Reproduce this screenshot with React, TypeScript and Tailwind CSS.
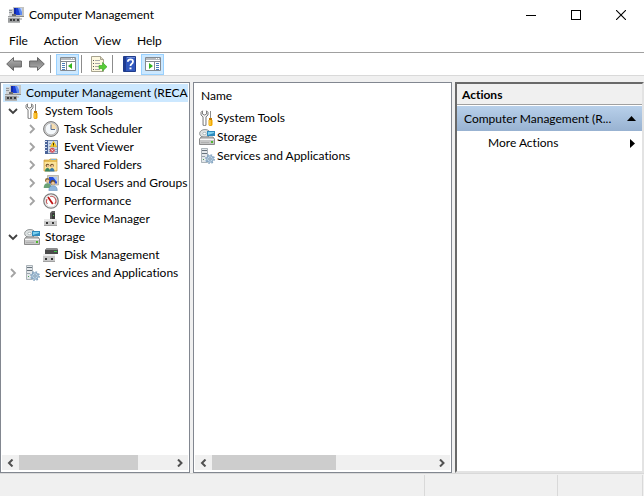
import type { ComponentType, ReactNode } from "react";
import clsx from "clsx";

type IconProps = { className?: string };
type IconType = ComponentType<IconProps>;

function Svg({ className, children }: { className?: string; children: ReactNode }) {
  return (
    <svg viewBox="0 0 16 16" className={clsx("h-4 w-4 shrink-0", className)} aria-hidden="true">
      {children}
    </svg>
  );
}

function ComputerIcon(props: IconProps) {
  return (
    <Svg {...props}>
      <path d="M5 0H16V10H5Z" fill="#c3c3c0" />
      <path d="M5 9H16V10H5Z" fill="#8c8c88" />
      <path d="M6 1H14V8H6Z" fill="#1a3fd6" />
      <path d="M10 1H14V8H12Z" fill="#5f8bf0" />
      <path d="M12 1H14V5Z" fill="#b9d0fb" />
      <path d="M6 1H8V8H6Z" fill="#1229a8" />
      <path d="M1 2H5V9H1Z" fill="#d2d4d6" />
      <path d="M1 3H4V4H1ZM1 5H4V6H1Z" fill="#8f959b" />
      <path d="M4 7H8V9H4Z" fill="#6a6a6e" />
      <path d="M0 9H12V15H0Z" fill="#9b9d9e" />
      <path d="M0 10H12V11H0Z" fill="#d5d7d8" />
      <path d="M0 15H12V16H0Z" fill="#b4b6b7" />
      <path d="M2 12H4V14H2ZM5 12H7V14H5ZM9 12H11V14H9Z" fill="#3a3b3d" />
      <path d="M12 11H14V13H12Z" fill="#c8c8c8" />
    </Svg>
  );
}

function ToolsIcon(props: IconProps) {
  return (
    <Svg {...props}>
      <path
        d="M3.5 .8L2 2.3V5L4 7V15.3H7V7L9 5V2.3L7.5 .8V4L5.5 5L3.5 4Z"
        fill="#ececec"
        stroke="#757575"
        strokeWidth=".9"
      />
      <path d="M5 7H6V15H5Z" fill="#fff" />
      <path d="M11 1H12V9H11Z" fill="#8b8b8b" />
      <path d="M10 8H13V10H10Z" fill="#c27800" />
      <path d="M9.5 10H13.5V15L12.5 16H10.5L9.5 15Z" fill="#f2a900" />
      <path d="M10.5 10H11.5V15H10.5Z" fill="#ffdc6a" />
    </Svg>
  );
}

function ClockIcon(props: IconProps) {
  return (
    <Svg {...props}>
      <circle cx="8" cy="8" r="7.4" fill="#d0d0d0" stroke="#777" strokeWidth="1" />
      <circle cx="8" cy="8" r="5.8" fill="#f4f8fb" stroke="#a5a5a5" strokeWidth=".5" />
      <path d="M8 8V2.3A5.6 5.6 0 0 1 13.6 8Z" fill="#f6ddb0" />
      <path d="M8 3.5V8.5H12" fill="none" stroke="#5a6f92" strokeWidth="1" />
    </Svg>
  );
}

function EventIcon(props: IconProps) {
  return (
    <Svg {...props}>
      <path d="M2.5 1.5H14.5V14.5H2.5Z" fill="#c9d8ec" stroke="#6f83a5" strokeWidth="1" />
      <path d="M2 1H5V15H2Z" fill="#4a6499" />
      <path d="M1 2H4V3H1ZM1 5H4V6H1ZM1 8H4V9H1ZM1 11H4V12H1Z" fill="#dbe3f0" />
      <path d="M6 4.5H8M6 7.5H8M6 10.5H8M6 12.5H8M12 10.5H14M12 12.5H14" stroke="#8b9cbd" strokeWidth="1" />
      <path d="M10.5 2.3L13.8 7.8H7.2Z" fill="#ffd226" stroke="#d09d00" strokeWidth=".5" />
      <path d="M10 4H11V6H10ZM10 6.5H11V7.3H10Z" fill="#3b3000" />
      <circle cx="9.3" cy="11.3" r="2.5" fill="#d5505a" />
      <path d="M8.3 10.3L10.3 12.3M10.3 10.3L8.3 12.3" stroke="#fff" strokeWidth=".7" />
    </Svg>
  );
}

function FoldersIcon(props: IconProps) {
  return (
    <Svg {...props}>
      <path d="M1 3L6 3L7 2H14V14H1Z" fill="#e6bd54" stroke="#c49a3c" strokeWidth=".7" />
      <path d="M8 2H13V3H8Z" fill="#7fb5d6" />
      <path d="M1.5 5H13.5V13.5H1.5Z" fill="#fbe39a" />
      <circle cx="4.5" cy="8.5" r="1.8" fill="#6b4b27" />
      <circle cx="4.8" cy="9" r="1.2" fill="#edc293" />
      <path d="M2 14.5Q2 11 4.5 11T7 14.5Z" fill="#39845b" />
      <circle cx="9" cy="8.5" r="1.8" fill="#6b4b27" />
      <circle cx="9.2" cy="9" r="1.2" fill="#edc293" />
      <path d="M6.7 14.5Q6.7 11 9 11T11.5 14.5Z" fill="#397ba8" />
    </Svg>
  );
}

function UsersIcon(props: IconProps) {
  return (
    <Svg {...props}>
      <path d="M4.5 .5H15.5V10H4.5Z" fill="#d4d0c4" stroke="#98958c" strokeWidth=".6" />
      <path d="M6 2H14V8.5H6Z" fill="#264edb" />
      <path d="M10 2H14V7Z" fill="#a9c7fb" />
      <circle cx="4.3" cy="5.3" r="2.3" fill="#8d6a35" />
      <circle cx="4.6" cy="6" r="1.6" fill="#edc69a" />
      <path d="M.7 13Q.7 8.2 4.5 8.2T8.5 13Z" fill="#6aa276" />
      <circle cx="9.8" cy="7.5" r="2.4" fill="#6e4e22" />
      <circle cx="10" cy="8.3" r="1.7" fill="#edc69a" />
      <path d="M5.8 15.5Q5.8 10.7 10 10.7T14.3 15.5Z" fill="#8fb6dc" stroke="#5584b5" strokeWidth=".5" />
    </Svg>
  );
}

function GaugeIcon(props: IconProps) {
  return (
    <Svg {...props}>
      <circle cx="8" cy="8" r="7.2" fill="#fff" stroke="#7d7d7d" strokeWidth="1.3" />
      <circle cx="8" cy="8" r="5.9" fill="#fff" stroke="#cfcfcf" strokeWidth=".6" />
      <path d="M4.4 11A4.6 4.6 0 0 1 4 6M7.2 3.5A4.6 4.6 0 0 1 11.8 11" fill="none" stroke="#c35a5a" strokeWidth="1.1" />
      <path d="M5 4L9.8 11" stroke="#c01414" strokeWidth="1.8" />
    </Svg>
  );
}

function DeviceIcon(props: IconProps) {
  return (
    <Svg {...props}>
      <path d="M7 2L9 0H12V8H7Z" fill="#5d5d5d" />
      <path d="M9 2H12V8H9Z" fill="#3a3a3a" />
      <path d="M10 4H11V5H10Z" fill="#55d055" />
      <path d="M1 8H14V15H1Z" fill="#c9c9c9" />
      <path d="M1 8H14V10H1Z" fill="#e9e9e9" />
      <path d="M1 14H14V15H1Z" fill="#a2a2a2" />
      <path d="M3 11H5V13H3ZM9 11H11V13H9Z" fill="#333" />
    </Svg>
  );
}

function StorageIcon(props: IconProps) {
  return (
    <Svg {...props}>
      <ellipse cx="6" cy="4.5" rx="5.4" ry="4" fill="#dde1e2" stroke="#7b8080" strokeWidth=".8" />
      <ellipse cx="5.5" cy="4.5" rx="1.7" ry="1.2" fill="#fff" stroke="#899999" strokeWidth=".6" />
      <path d="M8 2H16V7H8Z" fill="#2d8abd" />
      <path d="M9 3H15V4L9 6Z" fill="#7bd0ef" />
      <path d="M.5 10L2 8H14L15.5 10V15.5H.5Z" fill="#c6c6c6" stroke="#757575" strokeWidth=".8" />
      <path d="M1 10H15V11H1Z" fill="#f5f5f5" />
      <path d="M2 13H10V14H2Z" fill="#b0b0b0" />
      <path d="M12 12H14V14H12Z" fill="#4eb82d" />
    </Svg>
  );
}

function DiskIcon(props: IconProps) {
  return (
    <Svg {...props}>
      <path d="M2 3L4 1H14L15 3V7H2Z" fill="#4b4b4b" />
      <path d="M4 1H14L15 3H2Z" fill="#8d8d8d" />
      <path d="M11 4H14V5H11Z" fill="#40c94b" />
      <path d="M0 7H12V15H0Z" fill="#c9c9c9" />
      <path d="M0 7H12V9H0Z" fill="#ececec" />
      <path d="M0 14H12V15H0Z" fill="#a2a2a2" />
      <path d="M2 11H4V13H2ZM8 11H10V13H8Z" fill="#333" />
    </Svg>
  );
}

function ServerIcon(props: IconProps) {
  return (
    <Svg {...props}>
      <path d="M2.5 .5H8.5V14.5H2.5Z" fill="#e4e8eb" stroke="#98a2aa" strokeWidth=".8" />
      <path d="M3 2H8V3H3ZM3 5H8V6H3Z" fill="#68747d" />
      <path d="M3 8H6V9H3Z" fill="#9ba5ac" />
      <path d="M4 11H5V12H4Z" fill="#48a052" />
      <circle cx="11" cy="11" r="4.2" fill="none" stroke="#86a6c2" strokeWidth="1.4" strokeDasharray="1.7 1.6" />
      <circle cx="11" cy="11" r="3.3" fill="#c3d8e9" stroke="#6f93b3" strokeWidth=".8" />
      <circle cx="11" cy="11" r="1.2" fill="#fff" stroke="#567a99" strokeWidth=".8" />
    </Svg>
  );
}

function BackIcon(props: IconProps) {
  return (
    <Svg {...props}>
      <defs>
        <linearGradient id="arrowGrad" x1="0" y1="0" x2="0" y2="1">
          <stop offset="0%" stopColor="#b9b9b9" />
          <stop offset="50%" stopColor="#929292" />
          <stop offset="100%" stopColor="#777" />
        </linearGradient>
      </defs>
      <path d="M.7 8L7.5 1.5V5H15.4V11H7.5V14.5Z" fill="url(#arrowGrad)" stroke="#686868" strokeWidth="1" />
    </Svg>
  );
}

function ForwardIcon() {
  return <BackIcon className="rotate-180" />;
}

function TreePaneIcon(props: IconProps) {
  return (
    <Svg {...props}>
      <path d="M.5 1.5H15.5V14.5H.5Z" fill="#fff" stroke="#848a91" />
      <path d="M1 2H15V4H1Z" fill="#b7bbc0" />
      <path d="M11 2H12V3H11ZM13 2H14V3H13Z" fill="#fff" />
      <path d="M1 5.5H15M6.5 6V14" stroke="#848a91" strokeWidth="1" />
      <path d="M2 7.5H5M2 9.5H5M2 11.5H5M2 13.5H5" stroke="#4a7bb9" strokeWidth="1" />
      <path d="M8 10L12 7V13Z" fill="#33b51e" />
    </Svg>
  );
}

function ActionPaneIcon(props: IconProps) {
  return (
    <Svg {...props}>
      <path d="M.5 1.5H15.5V14.5H.5Z" fill="#fff" stroke="#848a91" />
      <path d="M1 2H15V4H1Z" fill="#b7bbc0" />
      <path d="M11 2H12V3H11ZM13 2H14V3H13Z" fill="#fff" />
      <path d="M1 5.5H15M9.5 6V14" stroke="#848a91" strokeWidth="1" />
      <path d="M11 7.5H14M11 9.5H14M11 11.5H14M11 13.5H14" stroke="#4a7bb9" strokeWidth="1" />
      <path d="M8 10L4 7V13Z" fill="#33b51e" />
    </Svg>
  );
}

function ExportIcon(props: IconProps) {
  return (
    <Svg {...props}>
      <path d="M.5 .5H9.5L12.5 3.5V15.5H.5Z" fill="#fdf8df" stroke="#a7a38f" />
      <path d="M9.5 .5V3.5H12.5" fill="#ddd8c0" stroke="#a7a38f" />
      <path d="M2 4.5H3M2 7.5H3M2 10.5H3M2 13.5H3" stroke="#555" />
      <path d="M4 4.5H9M4 7.5H9M4 10.5H8M4 13.5H9" stroke="#a8a8a8" />
      <path d="M8 9.5H11.5V6.5L16 10.8L11.5 15V12.5H8Z" fill="#57cd35" stroke="#329f20" strokeWidth=".6" />
    </Svg>
  );
}

function HelpIcon(props: IconProps) {
  return (
    <Svg {...props}>
      <path d="M1.5 .5H13.5V15.5H1.5Z" fill="#3158be" stroke="#203c8b" />
      <path d="M2 1H4V15H2Z" fill="#203c91" />
      <path d="M5 1H13V2H5Z" fill="#718fda" />
      <path d="M5.8 5.8Q6 3.3 8.5 3.3T11 5.5Q11 7 9.5 8Q8.5 8.7 8.5 10" fill="none" stroke="#fff" strokeWidth="1.8" />
      <path d="M7.5 11.5H9.5V13.3H7.5Z" fill="#fff" />
    </Svg>
  );
}

const menus = ["File", "Action", "View", "Help"];

interface Node {
  label: string;
  icon: IconType;
  open?: boolean;
  leaf?: boolean;
  children?: Node[];
}

const nodes: Node[] = [
  {
    label: "System Tools",
    icon: ToolsIcon,
    open: true,
    children: [
      { label: "Task Scheduler", icon: ClockIcon },
      { label: "Event Viewer", icon: EventIcon },
      { label: "Shared Folders", icon: FoldersIcon },
      { label: "Local Users and Groups", icon: UsersIcon },
      { label: "Performance", icon: GaugeIcon },
      { label: "Device Manager", icon: DeviceIcon, leaf: true },
    ],
  },
  {
    label: "Storage",
    icon: StorageIcon,
    open: true,
    children: [{ label: "Disk Management", icon: DiskIcon, leaf: true }],
  },
  { label: "Services and Applications", icon: ServerIcon },
];

function Chevron({ open }: { open?: boolean }) {
  return (
    <svg viewBox="0 0 10 10" className="h-2.5 w-2.5" aria-hidden="true">
      <path
        d={open ? "M1 3L5 7L9 3" : "M3 1L7 5L3 9"}
        fill="none"
        stroke={open ? "#404040" : "#a3a3a3"}
        strokeWidth="1.8"
      />
    </svg>
  );
}

function TreeNode({ node }: { node: Node }) {
  const Icon = node.icon;
  return (
    <li role="treeitem" aria-expanded={node.leaf ? undefined : !!node.open}>
      <div className="flex h-[18px] items-center">
        <span className="flex w-[19px] shrink-0">
          {!node.leaf && (
            <button type="button" aria-label={`Toggle ${node.label}`} className="ml-[3px]">
              <Chevron open={node.open} />
            </button>
          )}
        </span>
        <Icon />
        <span className="ml-[5px] whitespace-nowrap">{node.label}</span>
      </div>
      {node.children && (
        <ul role="group" className="pl-[19px]">
          {node.children.map((child) => (
            <TreeNode key={child.label} node={child} />
          ))}
        </ul>
      )}
    </li>
  );
}

function ScrollArrow({ right }: { right?: boolean }) {
  return (
    <button
      type="button"
      aria-label={right ? "Scroll right" : "Scroll left"}
      className="flex w-[17px] shrink-0 items-center justify-center"
    >
      <svg viewBox="0 0 8 8" className="h-2 w-2" aria-hidden="true">
        <path d={right ? "M2 .5L5.5 4L2 7.5" : "M5.5 .5L2 4L5.5 7.5"} fill="none" stroke="#505050" strokeWidth="2" />
      </svg>
    </button>
  );
}

function ScrollBar({ thumb }: { thumb: number }) {
  return (
    <div className="flex h-[15px] shrink-0 bg-[#f0f0f0]">
      <ScrollArrow />
      <div className="flex-1">
        <div className="h-full bg-[#cdcdcd]" style={{ width: `${thumb}%` }} />
      </div>
      <ScrollArrow right />
    </div>
  );
}

function ToolButton({ label, icon: Icon, active }: { label: string; icon: IconType; active?: boolean }) {
  return (
    <button
      type="button"
      aria-label={label}
      aria-pressed={active}
      className={clsx(
        "flex h-[21px] w-[23px] items-center justify-center",
        active && "border border-[#99d1ff] bg-[#cce8ff]"
      )}
    >
      <Icon />
    </button>
  );
}

function Separator() {
  return <span className="ml-[2px] mr-[5px] h-[18px] w-px bg-[#8c8c8c]" />;
}

function TitleBar() {
  return (
    <header className="flex h-[30px] shrink-0 items-center bg-white pl-2">
      <ComputerIcon />
      <h1 className="ml-[5px] flex-1">Computer Management</h1>
      <button type="button" aria-label="Minimize" className="flex h-full w-[45px] items-center justify-center">
        <span className="h-px w-2.5 bg-black" />
      </button>
      <button type="button" aria-label="Maximize" className="flex h-full w-[45px] items-center justify-center">
        <span className="h-2.5 w-2.5 border border-black" />
      </button>
      <button type="button" aria-label="Close" className="flex h-full w-[46px] items-center justify-center">
        <svg viewBox="0 0 10 10" className="h-2.5 w-2.5" aria-hidden="true">
          <path d="M0 0L10 10M10 0L0 10" stroke="#000" strokeWidth="1.1" />
        </svg>
      </button>
    </header>
  );
}

function Toolbar() {
  return (
    <div role="toolbar" className="flex h-[23px] shrink-0 items-center border-b border-[#d9d9d9] bg-white pl-[2px]">
      <ToolButton label="Back" icon={BackIcon} />
      <ToolButton label="Forward" icon={ForwardIcon} />
      <Separator />
      <ToolButton label="Show/Hide Console Tree" icon={TreePaneIcon} active />
      <Separator />
      <ToolButton label="Export List" icon={ExportIcon} />
      <Separator />
      <ToolButton label="Help" icon={HelpIcon} />
      <ToolButton label="Show/Hide Action Pane" icon={ActionPaneIcon} active />
    </div>
  );
}

function ConsoleTree() {
  return (
    <nav className="flex w-[190px] shrink-0 flex-col border border-[#828790] bg-white p-px pb-[2px]">
      <div className="flex-1 overflow-hidden">
        <div className="ml-px flex h-[18px] items-center bg-[#cce8ff] pl-[2px]">
          <ComputerIcon />
          <span className="ml-[5px] whitespace-nowrap">Computer Management (RECA</span>
        </div>
        <ul role="tree" className="pl-[3px]">
          {nodes.map((node) => (
            <TreeNode key={node.label} node={node} />
          ))}
        </ul>
      </div>
      <ScrollBar thumb={78} />
    </nav>
  );
}

function ResultList() {
  return (
    <main className="flex min-w-0 flex-1 flex-col border border-[#828790] bg-white p-px pb-[2px]">
      <div className="flex-1 overflow-hidden">
        <table className="w-full text-left">
          <thead>
            <tr>
              <th className="h-6 pl-1.5 font-normal">Name</th>
            </tr>
          </thead>
          <tbody>
            {nodes.map(({ label, icon: Icon }) => (
              <tr key={label}>
                <td className="h-[19px] pl-1">
                  <span className="flex items-center gap-[2px] whitespace-nowrap">
                    <Icon />
                    {label}
                  </span>
                </td>
              </tr>
            ))}
          </tbody>
        </table>
      </div>
      <ScrollBar thumb={56} />
    </main>
  );
}

function ActionsPane() {
  return (
    <aside className="w-[189px] shrink-0 border-2 border-b-[#e3e3e3] border-l-[#696969] border-r-[#e3e3e3] border-t-[#696969] bg-white">
      <h2 className="flex h-[21px] items-center border-b border-[#a0a0a0] bg-[#f0f0f0] pl-[5px] pt-px font-bold">
        Actions
      </h2>
      <button
        type="button"
        className="mt-px flex h-[25px] w-full items-center justify-between bg-linear-to-b from-[#b8d0ea] to-[#98b2d1] pl-[7px] pr-1.5"
      >
        Computer Management (R...
        <svg viewBox="0 0 9 5" className="h-[5px] w-[9px]" aria-hidden="true">
          <path d="M0 5L4.5 0L9 5Z" />
        </svg>
      </button>
      <button type="button" className="flex h-6 w-full items-center justify-between pl-[31px] pr-[7px]">
        More Actions
        <svg viewBox="0 0 5 9" className="h-[9px] w-[5px]" aria-hidden="true">
          <path d="M0 0L5 4.5L0 9Z" />
        </svg>
      </button>
    </aside>
  );
}

export default function App() {
  return (
    <div className="flex h-screen flex-col overflow-hidden bg-[#f0f0f0] font-['Lato',sans-serif] text-[12px] leading-4 text-black [font-variant-ligatures:none]">
      <TitleBar />
      <div role="menubar" className="flex h-[23px] shrink-0 items-center border-b border-[#a0a0a0] bg-white pl-px">
        {menus.map((menu) => (
          <button key={menu} type="button" role="menuitem" className="px-2">
            {menu}
          </button>
        ))}
      </div>
      <Toolbar />
      <div className="mt-1.5 flex min-h-0 flex-1 gap-[3px]">
        <ConsoleTree />
        <ResultList />
        <ActionsPane />
      </div>
      <footer className="flex h-[23px] shrink-0 border-t border-[#d9d9d9] pt-px">
        <div className="flex-1 border-r border-[#d9d9d9]" />
        <div className="w-[133px] border-r border-[#d9d9d9]" />
        <div className="mr-px w-[85px] border-r border-[#d9d9d9]" />
      </footer>
    </div>
  );
}
